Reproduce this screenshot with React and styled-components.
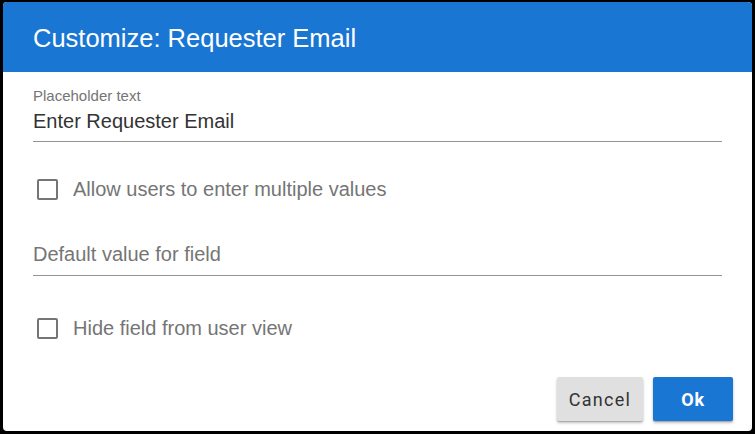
import React from 'react';
import styled, { createGlobalStyle } from 'styled-components';

const GlobalStyle = createGlobalStyle`
  html, body {
    margin: 0;
    padding: 0;
    background: #000;
  }
  * {
    box-sizing: border-box;
  }
`;

const Frame = styled.div`
  width: 755px;
  height: 434px;
  padding: 2px 3px 3px 3px;
  background: #000;
`;

const Dialog = styled.div`
  height: 100%;
  display: flex;
  flex-direction: column;
  background: #fff;
  border-radius: 4px;
  overflow: hidden;
  font-family: 'Liberation Sans', Arial, sans-serif;
`;

const Header = styled.div`
  height: 70px;
  flex: none;
  display: flex;
  align-items: center;
  padding: 3px 30px 0;
  background: #1976d2;
  color: #fff;
  font-size: 25.5px;
`;

const Body = styled.div`
  flex: 1;
  display: flex;
  flex-direction: column;
  padding: 15px 30px 0;
`;

const TextField = styled.div`
  display: flex;
  flex-direction: column;
  border-bottom: 1px solid #949494;
  margin-top: ${p => p.$top || 0}px;
`;

const FieldLabel = styled.div`
  font-size: 15px;
  line-height: 17px;
  color: #757575;
`;

const FieldValue = styled.div`
  font-size: 20px;
  line-height: 24px;
  padding: ${p => (p.$placeholder ? '9px 0 9px' : '5px 0 8px')};
  color: ${p => (p.$placeholder ? '#757575' : '#333')};
`;

const CheckRow = styled.label`
  display: flex;
  align-items: center;
  gap: 15px;
  height: 40px;
  margin-top: ${p => p.$top || 0}px;
  padding-left: 4px;
  font-size: 20px;
  color: #757575;
`;

const Box = styled.span`
  width: 21px;
  height: 21px;
  border: 2px solid #757575;
  border-radius: 2px;
  flex: none;
`;

const Actions = styled.div`
  margin-top: auto;
  display: flex;
  justify-content: flex-end;
  gap: 10px;
  padding: 0 19px 10px 0;
`;

const Button = styled.button`
  height: 44px;
  min-width: ${p => p.$width}px;
  border: none;
  border-radius: 2px;
  font-family: Roboto, 'Liberation Sans', sans-serif;
  font-size: 18px;
  font-weight: ${p => (p.$primary ? 700 : 400)};
  letter-spacing: ${p => (p.$primary ? '0.8px' : '1.3px')};
  color: ${p => (p.$primary ? '#fff' : '#333')};
  background: ${p => (p.$primary ? '#1976d2' : '#e0e0e0')};
  box-shadow: 0 2px 3px rgba(0, 0, 0, 0.25), 0 1px 1px rgba(0, 0, 0, 0.15);
  cursor: pointer;
`;

function CheckField({ label, top }) {
  return (
    <CheckRow $top={top}>
      <Box />
      {label}
    </CheckRow>
  );
}

export default function App() {
  return (
    <>
      <GlobalStyle />
      <Frame>
        <Dialog>
          <Header>Customize: Requester Email</Header>
          <Body>
            <TextField>
              <FieldLabel>Placeholder text</FieldLabel>
              <FieldValue>Enter Requester Email</FieldValue>
            </TextField>
            <CheckField label="Allow users to enter multiple values" top={27} />
            <TextField $top={24}>
              <FieldValue $placeholder>Default value for field</FieldValue>
            </TextField>
            <CheckField label="Hide field from user view" top={32} />
          </Body>
          <Actions>
            <Button $width={86}>Cancel</Button>
            <Button $primary $width={80}>Ok</Button>
          </Actions>
        </Dialog>
      </Frame>
    </>
  );
}
